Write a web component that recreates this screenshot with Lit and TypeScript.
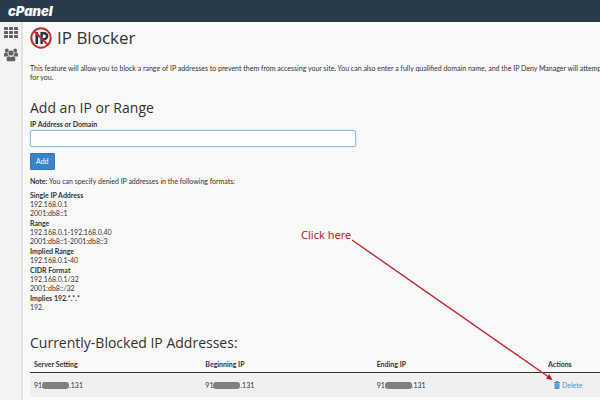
import { LitElement, html, css, svg } from "lit";
import { customElement } from "lit/decorators.js";

interface FormatGroup {
  title: string;
  examples: string[];
}

const FORMATS: FormatGroup[] = [
  { title: "Single IP Address", examples: ["192.168.0.1", "2001:db8::1"] },
  { title: "Range", examples: ["192.168.0.1-192.168.0.40", "2001:db8::1-2001:db8::3"] },
  { title: "Implied Range", examples: ["192.168.0.1-40"] },
  { title: "CIDR Format", examples: ["192.168.0.1/32", "2001:db8::/32"] },
  { title: "Implies 192.*.*.*", examples: ["192."] },
];

const COLUMNS = ["Server Setting", "Beginning IP", "Ending IP"];

@customElement("side-nav")
export class SideNav extends LitElement {
  static styles = css`
    :host {
      display: flex;
      flex-direction: column;
      align-items: center;
      gap: 9px;
      box-sizing: border-box;
      width: 23px;
      flex: none;
      padding-top: 5px;
      background: #f3f3f3;
      border-right: 2px solid #e2e2e4;
    }
    .item {
      display: block;
      line-height: 0;
      color: #626262;
    }
  `;

  render() {
    const cells = [0, 1, 2].flatMap((r) =>
      [0, 1, 2].map((c) => svg`<rect x=${c * 5} y=${r * 4} width="4" height="3" rx="0.5" />`)
    );
    return html`
      <a class="item" href="#home" aria-label="Home">
        <svg width="14" height="12" viewBox="0 0 14 12" fill="currentColor">${cells}</svg>
      </a>
      <a class="item" href="#users" aria-label="User manager">
        <svg width="14" height="14" viewBox="0 0 14 14" fill="currentColor">
          <circle cx="2.8" cy="2.4" r="1.9" />
          <circle cx="11.2" cy="2.4" r="1.9" />
          <path d="M0 8V6.4C0 5 .8 4.600 1.600 4.600h1.800C3.500 6 4 7 4.800 7.600 4 7.600 3.400 8 3 8.600H.8C.3 8.600 0 8.400 0 8z" />
          <path d="M14 8V6.400c0-1.400-.8-1.800-1.600-1.800h-1.800C10.500 6 10 7 9.200 7.600c.8 0 1.400.4 1.800 1h2.200c.5 0 .8-.2.8-.6z" />
          <circle cx="7" cy="5" r="2.600" />
          <path d="M2.700 12V10.400c0-1.500.8-2.200 1.900-2.200.7.500 1.500.8 2.400.8s1.700-.3 2.400-.8c1.100 0 1.900.7 1.900 2.200V12c0 .9-.5 1.300-1.300 1.300H4c-.8 0-1.300-.4-1.300-1.300z" />
        </svg>
      </a>
    `;
  }
}

@customElement("blocked-table")
export class BlockedTable extends LitElement {
  static styles = css`
    :host {
      display: block;
      margin-top: 2px;
    }
    .table {
      width: 100%;
      table-layout: fixed;
      border-collapse: collapse;
      font-size: 7px;
      line-height: 10px;
    }
    .head {
      box-sizing: border-box;
      padding: 3px 4px;
      text-align: left;
      font-weight: 700;
      border-bottom: 1px solid #333;
    }
    .head-actions {
      width: 56px;
    }
    .cell {
      padding: 7px 4px;
      background: #f0f0f0;
    }
    .ip {
      display: flex;
      align-items: center;
    }
    .mask {
      width: 27px;
      height: 7px;
      border-radius: 3px;
      background: #808080;
    }
    .delete {
      display: flex;
      align-items: center;
      gap: 2px;
      margin-left: 6px;
      color: #4e93c4;
      text-decoration: none;
    }
  `;

  render() {
    return html`
      <table class="table">
        <thead>
          <tr>
            ${COLUMNS.map((c) => html`<th class="head" scope="col">${c}</th>`)}
            <th class="head head-actions" scope="col">Actions</th>
          </tr>
        </thead>
        <tbody>
          <tr>
            ${COLUMNS.map(
              () => html`<td class="cell">
                <span class="ip">91<span class="mask"></span><span>.131</span></span>
              </td>`
            )}
            <td class="cell">
              <a class="delete" href="#delete">
                <svg width="6" height="8" viewBox="0 0 6 8" fill="currentColor" aria-hidden="true">
                  <path d="M0 1h1.800L2.200 0h1.600l.4 1H6v1H0z" />
                  <path d="M.5 2.300h5V7.300c0 .4-.3.700-.7.700H1.200C.8 8 .5 7.700.5 7.300z" />
                  <path d="M2 3.200v3.800M4 3.200v3.800" stroke="#a9cbe2" stroke-width=".4" />
                </svg>
                Delete
              </a>
            </td>
          </tr>
        </tbody>
      </table>
    `;
  }
}

@customElement("app-root")
export class AppRoot extends LitElement {
  static styles = css`
    :host {
      display: flex;
      flex-direction: column;
      position: relative;
      min-height: 100vh;
      overflow: hidden;
      background: #f9f9f9;
      color: #333;
      font-family: Lato, "Open Sans", sans-serif;
      font-size: 7px;
      line-height: 9px;
    }
    .topbar {
      display: flex;
      align-items: center;
      height: 22px;
      padding-left: 8px;
      background: #293a4a;
    }
    .logo {
      color: #fff;
      font-family: Inter, sans-serif;
      font-size: 13px;
      line-height: 18px;
      font-weight: 900;
      font-style: italic;
      text-decoration: none;
    }
    .body {
      display: flex;
      flex: 1;
    }
    .content {
      flex: 1;
      min-width: 0;
      padding: 4px 0 0 7px;
    }
    .title {
      display: flex;
      align-items: center;
      gap: 5px;
      margin: 0;
      font-family: "Open Sans", sans-serif;
      font-size: 17px;
      line-height: 24px;
      font-weight: 400;
    }
    .intro {
      margin: 14px 0 0;
      white-space: nowrap;
    }
    .heading {
      margin: 0;
      font-family: "Open Sans", sans-serif;
      font-size: 14px;
      line-height: 22px;
      font-weight: 400;
    }
    .form {
      display: flex;
      flex-direction: column;
      align-items: flex-start;
      margin-top: 15px;
    }
    .label {
      margin-top: 1px;
      font-weight: 700;
    }
    .field {
      box-sizing: border-box;
      width: 326px;
      max-width: 100%;
      height: 17px;
      margin-top: 1px;
      padding: 0 4px;
      border: 1px solid #8fbfe3;
      border-radius: 2px;
      outline: none;
      background: #fff;
      box-shadow: 0 0 2px #b9d9f0;
      color: inherit;
      font: inherit;
    }
    .add {
      height: 17px;
      margin-top: 6px;
      padding: 0 5px;
      border: 1px solid #2e79b9;
      border-radius: 1px;
      background: #3784c8;
      color: #fff;
      font: inherit;
    }
    .note {
      margin: 7px 0 5px;
    }
    .formats {
      display: flex;
      flex-direction: column;
      gap: 1px;
      margin: 0;
    }
    .term {
      font-weight: 700;
    }
    .example {
      margin: 0;
    }
    .blocked {
      margin-top: 20px;
    }
    .callout {
      position: absolute;
      left: 301px;
      top: 228px;
      color: #b8232f;
      font-family: "Noto Sans", sans-serif;
      font-size: 11px;
      line-height: 14px;
    }
    .arrow {
      position: absolute;
      left: 350px;
      top: 238px;
    }
  `;

  render() {
    return html`
      <header class="topbar"><a class="logo" href="#cpanel">cPanel</a></header>
      <div class="body">
        <side-nav></side-nav>
        <main class="content">
          <h1 class="title">
            <svg width="22" height="22" viewBox="0 0 22 22" aria-hidden="true">
              <circle cx="11" cy="11" r="9.500" fill="#f4eeee" />
              <path d="M6.800 5v12" stroke="#26323f" stroke-width="2.600" />
              <path d="M11.600 17V6.200h2.600a2.800 2.800 0 0 1 0 5.900h-2.600" fill="none" stroke="#26323f" stroke-width="2.400" />
              <circle cx="11" cy="11" r="9.700" fill="none" stroke="#c0302f" stroke-width="2" />
              <path d="M4.200 4.200l13.600 13.600" stroke="#c0302f" stroke-width="2" />
            </svg>
            IP Blocker
          </h1>
          <p class="intro">
            This feature will allow you to block a range of IP addresses to prevent them from accessing your site. You can also enter a fully qualified domain name, and the IP Deny Manager will attemp<br />for you.
          </p>
          <form class="form" @submit=${(e: Event) => e.preventDefault()}>
            <h2 class="heading">Add an IP or Range</h2>
            <label class="label" for="ip">IP Address or Domain</label>
            <input class="field" id="ip" type="text" />
            <button class="add" type="submit">Add</button>
          </form>
          <p class="note"><b>Note:</b> You can specify denied IP addresses in the following formats:</p>
          <dl class="formats">
            ${FORMATS.map(
              (f) => html`<div>
                <dt class="term">${f.title}</dt>
                ${f.examples.map((x) => html`<dd class="example">${x}</dd>`)}
              </div>`
            )}
          </dl>
          <section class="blocked">
            <h2 class="heading">Currently-Blocked IP Addresses:</h2>
            <blocked-table></blocked-table>
          </section>
        </main>
      </div>
      <span class="callout">Click here</span>
      <svg class="arrow" width="206" height="146" viewBox="0 0 206 146" aria-hidden="true">
        <path d="M2 2L198 138.500" stroke="#bb2a35" stroke-width="1.400" />
        <path d="M202.500 142l-6.400-1.200 3.200-4.800z" fill="#c2141f" />
      </svg>
    `;
  }
}
